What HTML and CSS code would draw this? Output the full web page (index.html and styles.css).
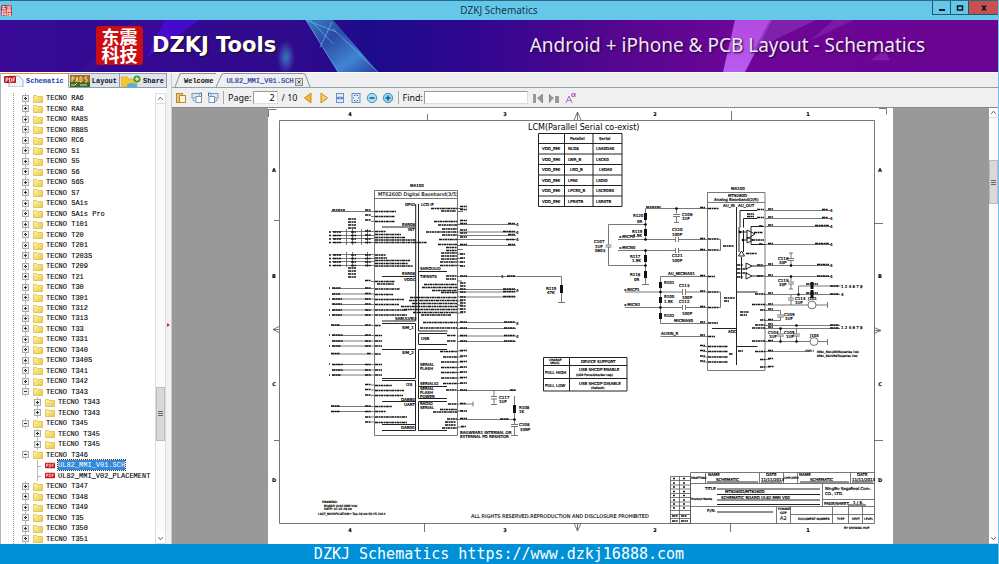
FILE: index.html
```html
<!DOCTYPE html>
<html lang="en">
<head>
<meta charset="utf-8">
<title>DZKJ Schematics</title>
<link rel="stylesheet" href="styles.css">
</head>
<body>
<svg class="defs" aria-hidden="true">
  <defs>
    <linearGradient id="gold" x1="0" y1="0" x2="1" y2="1"><stop offset="0" stop-color="#fff6a8"/><stop offset="1" stop-color="#ecc843"/></linearGradient>
    <symbol id="folder" viewBox="0 0 10 9"><path d="M.5 1.5h3l1 1h5v6h-9z" fill="url(#gold)" stroke="#d6b545" stroke-width=".7"/></symbol>
    <symbol id="pdf" viewBox="0 0 10 6"><rect width="10" height="6" rx="1" fill="#c4161c"/><path d="M1.5 4.5v-3h1.2v1.5H1.5M4.2 1.5v3h1l.6-.7V2l-.6-.5zM7.3 4.500v-3h1.500M7.300 3h1.200" fill="none" stroke="#fff" stroke-width=".6"/></symbol>
  </defs>
</svg>
<div class="window">
  <header class="titlebar">
    <span class="appicon" aria-hidden="true"><span>东震</span><span>科技</span></span>
    <h1>DZKJ Schematics</h1>
    <div class="winbtns">
      <button aria-label="Minimize"><svg viewBox="0 0 8 8"><path d="M1 6h6" stroke="#111" stroke-width="2"/></svg></button>
      <button aria-label="Maximize"><svg viewBox="0 0 8 8"><rect x="1.500" y="2" width="5" height="4" fill="none" stroke="#111" stroke-width="1.500"/></svg></button>
      <button class="close" aria-label="Close"><svg viewBox="0 0 8 8"><path d="M2 1.500l4 5M6 1.500l-4 5" stroke="#111" stroke-width="1.500"/></svg></button>
    </div>
  </header>

  <section class="banner">
    <svg class="art" viewBox="0 0 998 53" preserveAspectRatio="none" aria-hidden="true">
      <defs>
        <linearGradient id="tri" x1="0" y1="0" x2="1" y2="1"><stop offset="0" stop-color="#3d7fc0"/><stop offset=".35" stop-color="#2b4aa8"/><stop offset=".7" stop-color="#3f86d2"/><stop offset="1" stop-color="#2a3aa0"/></linearGradient>
        <linearGradient id="pink" x1="0" y1="0" x2="0" y2="1"><stop offset="0" stop-color="#b44ae0"/><stop offset="1" stop-color="#b65cf0"/></linearGradient>
        <radialGradient id="glow"><stop offset="0" stop-color="#3f8fd0" stop-opacity=".8"/><stop offset="1" stop-color="#3f8fd0" stop-opacity="0"/></radialGradient>
      </defs>
      <path d="M80 53l55-53h12L92 53z" fill="#35108f"/>
      <path d="M100 53l50-53h45l-40 30z" fill="#4208a8" opacity=".4"/>
      <path d="M165 0h34l-53 39z" fill="#4b0be0" opacity=".75"/>
      <ellipse cx="286" cy="38" rx="9" ry="17" fill="url(#glow)"/>
      <path d="M306 0h27l45 53h-40z" fill="url(#tri)"/>
      <path d="M306 0l32 53M310 0l23 24M320 28l12-26M333 9l45 44M306 0l30 12" stroke="#68bde6" fill="none" opacity=".7"/>
      <path d="M735 0h37l-27 53h-22z" fill="url(#pink)"/>
      <path d="M770 0h46l-62 30z" fill="#8c2cb8" opacity=".7"/>
      <path d="M834 0h20l-44 21z" fill="#8426ad" opacity=".6"/>
      <path d="M870 41l15-10 5 10z" fill="#8d2bb4" opacity=".6"/>
    </svg>
    <span class="logo" aria-hidden="true"><span>东震</span><span>科技</span></span>
    <strong>DZKJ Tools</strong>
    <p>Android + iPhone &amp; PCB Layout - Schematics</p>
  </section>

  <div class="work">
    <aside class="side">
      <nav class="sidetabs">
        <button class="on"><svg class="ic-pdf" viewBox="0 0 20 12"><path d="M5 1h10l4 4v7H5z" fill="#eef4fa" stroke="#9bb4c8"/><rect y="1" width="12" height="7" rx="1" fill="#b9161b"/><path d="M2 7V3h2v2H2M5.500 3v4h1l1-1V4l-1-1zM9 7V3h2M9 5h2" fill="none" stroke="#fff" stroke-width=".8"/></svg>Schematic</button>
        <button><svg class="ic-pads" viewBox="0 0 20 12"><rect width="20" height="12" fill="#a56b1e"/><rect y="7" width="20" height="5" fill="#356a2b"/><path d="M2 7V2h2v2H2M6 7l1-5 1 5M10 2v5h1l1-1V3l-1-1zM17 2h-2v2h2v3h-2M1 10h4l2-2M10 10h7" fill="none" stroke="#f6dc8c"/></svg>Layout</button>
        <button><svg class="ic-share" viewBox="0 0 20 12"><path d="M0 2h6l2 2h8v8H0z" fill="#f5c530" stroke="#dca31c" stroke-width=".6"/><ellipse cx="11" cy="10.500" rx="5" ry="2.500" fill="#55aee8"/><circle cx="16" cy="4" r="3.500" fill="#3d9d35"/><path d="M14 4h4M16 2v4" stroke="#fff"/></svg>Share</button>
      </nav>
      <div class="treebox">
        <ul class="tree" id="tree" role="tree" aria-label="Schematics"></ul>
        <div class="vscroll">
          <button aria-label="Scroll up"><svg viewBox="0 0 10 10"><path d="M2.500 6.500L5 3.500l2.500 3" fill="none" stroke="#555"/></svg></button>
          <span class="thumb"></span>
          <button aria-label="Scroll down"><svg viewBox="0 0 10 10"><path d="M2.500 3.500L5 6.500l2.500-3" fill="none" stroke="#555"/></svg></button>
        </div>
      </div>
    </aside>
    <div class="splitter"></div>
    <main class="main">
      <nav class="doctabs">
        <svg class="slant" viewBox="0 0 8 14"><path d="M1 14L6 1l2-.5" fill="none" stroke="#8795a3"/></svg>
        <button>Welcome</button>
        <svg class="slant" viewBox="0 0 8 14"><path d="M0 14L6 1l2-.5" fill="none" stroke="#8795a3"/></svg>
        <button class="on">UL82_MMI_V01.SCH</button>
        <button class="x" aria-label="Close tab"><svg viewBox="0 0 8 8"><rect x=".5" y=".5" width="7" height="7" fill="#ddd" stroke="#888"/><path d="M2.500 2.500l3 3M5.500 2.500l-3 3" stroke="#555"/></svg></button>
        <svg class="slant" viewBox="0 0 8 14"><path d="M0 .5l2 .5 5 13" fill="none" stroke="#8795a3"/></svg>
      </nav>
      <div class="toolbar">
        <button aria-label="Copy"><svg viewBox="0 0 12 12"><rect x="1.500" y="1.500" width="6" height="9" fill="#f0c46a" stroke="#b58c3c"/><rect x="4.500" y="3.500" width="6" height="7" fill="#fff3d2" stroke="#b58c3c"/></svg></button>
        <button aria-label="Rotate left"><svg viewBox="0 0 12 12"><rect x="1" y="1.500" width="7" height="4.500" fill="#dcecf8" stroke="#7197b9"/><rect x="5" y="4.500" width="5.500" height="6" fill="#fff" stroke="#7197b9"/><path d="M8.500 1h2v3M2 7.500l1.500 2" stroke="#2d6da6" fill="none"/></svg></button>
        <button aria-label="Rotate right"><svg viewBox="0 0 12 12"><rect x="4" y="1.500" width="7" height="4.500" fill="#dcecf8" stroke="#7197b9"/><rect x="2" y="4.500" width="5.500" height="6" fill="#fff" stroke="#7197b9"/><path d="M3.500 1h-2v3M10 7.500l-1.500 2" stroke="#2d6da6" fill="none"/></svg></button>
        <span class="sep"></span>
        <label for="page">Page:</label><input id="page" class="page" value="2"><span class="of">/ 10</span>
        <button aria-label="Previous page"><svg viewBox="0 0 12 12"><path d="M9 1v10L2.500 6z" fill="#f0b73a" stroke="#c88a1c"/></svg></button>
        <button aria-label="Next page"><svg viewBox="0 0 12 12"><path d="M3 1v10L9.500 6z" fill="#f6cf6a" stroke="#c88a1c"/></svg></button>
        <button aria-label="Fit width"><svg viewBox="0 0 12 12"><rect x="2.500" y="1.500" width="7" height="9" fill="#e4eefa" stroke="#6c8fc4"/><path d="M3 6h6M5 4.500L3.500 6 5 7.500M7 4.500L8.500 6 7 7.500" stroke="#2769b0" fill="none"/></svg></button>
        <button aria-label="Fit page"><svg viewBox="0 0 12 12"><rect x="2" y="1.500" width="8" height="9" fill="#e4eefa" stroke="#6c8fc4"/><path d="M6 2.500v1M6 8.500v1M3 6h1M8 6h1M4 4l1-1M7 3l1 1M4 8l1 1M7 9l1-1" stroke="#2769b0"/></svg></button>
        <button aria-label="Zoom out"><svg viewBox="0 0 12 12"><circle cx="6" cy="6" r="4.700" fill="#a5dcf4" stroke="#4b8fc0"/><path d="M3.500 6h5" stroke="#1c5790" stroke-width="1.500"/></svg></button>
        <button aria-label="Zoom in"><svg viewBox="0 0 12 12"><circle cx="6" cy="6" r="4.700" fill="#8fd2f2" stroke="#4b8fc0"/><path d="M3.500 6h5M6 3.500v5" stroke="#1c5790" stroke-width="1.500"/></svg></button>
        <span class="sep"></span>
        <label for="find">Find:</label><input id="find" class="find">
        <button aria-label="Find previous"><svg viewBox="0 0 12 12"><path d="M1 2h3v9H1zM5 6l5-4v9z" fill="#999"/><path d="M10.500 2v9" stroke="#888"/></svg></button>
        <button aria-label="Find next"><svg viewBox="0 0 12 12"><path d="M1 2l5 4-5 5zM7 4h4v7H7z" fill="#999"/><path d="M1.500 2v9" stroke="#888"/></svg></button>
        <button aria-label="Match case"><svg viewBox="0 0 12 12"><path d="M2 11l3-7 3 7M3 8.500h4" fill="none" stroke="#a078c4"/><circle cx="9" cy="3" r="1.500" fill="none" stroke="#b050b8"/><path d="M11 1v4" stroke="#b050b8"/></svg></button>
      </div>
      <div class="viewer">
        <div class="canvas">
          <svg class="sheet" viewBox="268 107 625 437" role="img" aria-label="Schematic page 2">
            <rect x="268" y="107" width="625" height="437" fill="#fff"/>
            <path class="w" d="M268.500 116v-7.500h8M879 107.500h7.500v6M279.500 119.500h595v403h-595zM427.500 113v6M731.500 110v9M424.500 522v9M730.500 522v9M274 219.500h5M274 439.500h5M874 222.500h9M874 439.500h9M577.500 111v8M574 119l3.500-8 3.500 8M577.500 522v8M574 522l3.500 8 3.500-8M279 325.500l-6 3 6 3M273 328.500h6M874 326.500l7 3-7 3M874 329.500h7"/>
            <g class="t5 mid">
              <text x="350" y="115">4</text><text x="505" y="115">3</text><text x="655" y="115">2</text><text x="808" y="115">1</text>
              <text x="350" y="531">4</text><text x="505" y="531">3</text><text x="655" y="531">2</text><text x="808" y="531">1</text>
              <text x="274" y="171">A</text><text x="274" y="277">B</text><text x="274" y="385">C</text><text x="274" y="481">D</text>
              <text x="880" y="171">A</text><text x="880" y="277">B</text><text x="880" y="385">C</text><text x="880" y="481">D</text>
            </g>

            <!-- LCM table -->
            <text class="t8" x="528" y="129">LCM(Parallel Serial co-exist)</text>
            <path class="w b" d="M538.500 132.500h83.500v73h-83.500zM564.500 132.500v73M593 132.500v73M538.500 142.500h83.500M538.500 153h83.500M538.500 163.500h83.500M538.500 174h83.500M538.500 184.500h83.500M538.500 195h83.500"/>
            <g class="t4">
              <text x="570" y="139">Parallel</text><text x="599" y="139">Serial</text>
              <text x="542" y="149">VDD_EMI</text><text x="568" y="149">NLD8</text><text x="596" y="149">LSA0DA0</text>
              <text x="542" y="160">VDD_EMI</text><text x="568" y="160">LWR_B</text><text x="596" y="160">LSCK0</text>
              <text x="542" y="170">VDD_EMI</text><text x="570" y="170">LRD_B</text><text x="599" y="170">LSDA0</text>
              <text x="542" y="181">VDD_EMI</text><text x="568" y="181">LPA0</text><text x="596" y="181">LSDI0</text>
              <text x="542" y="191">VDD_EMI</text><text x="568" y="191">LPCE0_B</text><text x="596" y="191">LSCE0B0</text>
              <text x="542" y="202">VDD_EMI</text><text x="568" y="202">LPRSTB</text><text x="596" y="202">LSRSTB</text>
            </g>

            <!-- Digital baseband -->
            <text class="t4" x="410" y="186">MA100</text>
            <text class="t5" x="378" y="195">MT6260D Digital Baseband(3/5)</text>
            <path class="w" d="M374.500 189.500h83v245h-83zM374.500 197.500h83"/>
            <path class="w b" d="M415.700 203v117M418.500 203v127h29M382 226h33.500M382 275.500h33.500M382 320h33.500M382 322.500h33.500v55H382M382 348.500h33.500M382 379.500h33.500v50H382M382 400.500h33.500M382 423.500h33.500M419 270.500h28M447 332.500h-28.500v11H447M447 348.500h-28.500v49H447M419 385.500h28M447 400.500h-28.500v29H447"/>
            <path class="w" d="M331 210.500h43M371 215.500h3M371 220.500h3M332 230.500h42M332 234.500h42M332 237.500h42M332 241.500h42M332 253.500h42M332 257.500h42M332 260.500h42M332 264.500h42M371 280.500h3M332 287.500h42M332 293h42M332 298h42M332 303.500h42M332 309h42M332 314h42M331 324.500h43M332 334.500h42M332 340h42M332 345h42M331 353h43M332 363.500h42M332 369h42M332 374h42M371 384h3M371 389h3M371 394.500h3M331 405.500h43M331 410.500h43M371 416h3M371 421h3"/>
            <path class="w" d="M457 207.500h6M457 210.500h6M457 223.500h59M457 231h59M457 234.500h59M457 238.500h59M457 244.500h59M457 248.500h6M457 253h6M457 257.500h6M457 261h6M457 264.500h6M457 275.500h104.500v26M558 301.500h7M457 280h5M457 288.500h59M457 291h59M457 296h59M457 300h6M457 304h6M457 308h6M457 312h6M457 321.500h59M457 327.500h59M457 335h59M457 340.500h59M457 350h6M457 356h6M457 361h6M457 366.500h6M457 371.500h6M457 377h6M457 382.500h6M457 389.500h59M457 403h16M473 400.500v5M457 410h6M457 418.500h58M457 426h6M346.500 228v16M352.500 228v16M361.500 228v16M346.500 251v15M352.500 251v15M367.500 228v15M367.500 251v15"/>
            <path class="k" d="M332 209h13M365 209h6M365 214h6M365 219h6M375 210.500h21M375 215.500h20M375 220.500h20M333 231h8M333 234.500h8M333 238h8M333 241.500h8M329 231h2M329 234.500h2M329 238h2M329 241.500h2M351 231h5M351 234.500h5M351 238h5M351 241.500h5M365 230h6M365 234h6M365 238h6M365 241.500h6M375 230.500h11M375 233.500h26M375 236.500h30M375 239h41M375 241.500h52M333 254h8M333 257.500h8M333 261h8M333 264.500h8M329 254h2M329 257.500h2M329 261h2M329 264.500h2M351 254h5M351 257.500h5M351 261h5M351 264.500h5M365 254h6M365 257.500h6M365 261h6M365 264.500h6M375 254h11M375 257h12M375 259.500h35M375 262.500h33M375 265h38M348 218h8M348 221h8M348 224h8M348 227h8M348 267h8M348 270h8M348 273h8M348 276h8"/>
            <path class="k" d="M365 279.500h6M375 280.500h20M377 283h17M332 287h9M332 293h8M332 298h10M332 303h10M332 309h10M332 314h10M365 287h6M365 292.500h6M365 298h6M365 303h6M365 309h6M365 314h6M375 288h25M375 293.500h18M375 298.500h29M375 303.500h24M375 309h32M375 314h32M331 324h9M365 324h6M375 324.500h6M332 334h11M332 340h11M332 345h9M365 334h6M365 340h6M365 345h6M375 334.500h7M375 340h7M375 345h7M331 352.500h9M367 352.500h4M375 353h6M332 363.500h11M332 369h11M332 374h9M365 363.500h6M365 369h6M365 374h6M375 363.500h7M375 369h7M375 374h7M365 383.500h6M365 388.500h6M365 394h6M375 384.500h17M375 389.500h29M375 394.500h28M331 405h9M331 410.500h9M365 405h6M365 410.500h6M375 405.500h17M375 410.500h11M365 416h6M365 421h6M375 416h32M375 421.500h32M329 287h1M329 298h1M329 309h1M329 314h1M329 334h1M329 345h1M329 363h1M329 374h1"/>
            <path class="k" d="M431 207.500h26M441 210h15M460 205.500h7M460 208.500h7M434 220.500h23M438 224h19M442 228h15M426 231h31M442 234h15M439 238.500h18M438 243.500h19M446 246.500h11M446 249.500h11M441 252h16M441 255h16M441 258h16M440 261h17M440 264.500h17M460 219.500h7M460 222.500h7M460 229h7M460 232h7M460 236h7M460 243.500h7M460 253h5M460 257h5M460 261h5M460 265h5M508 222.500h7M503 230.500h12M508 233.500h7M506 238.500h9M508 243.500h7M446 275h11M446 278h10M460 275h7M507 275h8M424 283.500h33M422 286.500h35M432 289.500h25M441 291.500h16M410 296.500h47M409 299.500h48M412 302.500h45M401 305.500h56M404 308.500h53M413 311.500h44M421 314h30M460 282h6M460 285h6M460 288h6M460 291h6M460 296h6M460 299h6M460 302h6M460 305h6M460 308h6M460 311h6M503 288h12M503 290.500h12M503 295.500h12M423 321.500h34M420 327h37M460 321h7M460 327h7M504 321h11M504 327h11M447 334.500h9M447 340h9M460 334.500h7M460 340h7M504 334.500h11M504 340h11M440 350.500h17M443 356h14M441 361h16M441 366.500h16M441 371.500h16M441 377h16M443 382.500h14M460 349.500h7M460 355h7M460 360.500h7M460 366h7M460 371h7M460 376.500h7M460 382h7M446 389h11M460 389h7M510 389h6M448 403h9M460 402.500h6M440 408.500h17M433 411h24M460 410h7M447 418h10M460 417.500h7M500 418h9M445 421h11M445 424h11M442 427h15M461 425.500h5"/>
            <g class="t4">
              <text x="405" y="205">GPIO</text><text x="421" y="205">LCD IF</text><text x="402" y="225">EAR08</text><text x="408" y="230">INT</text><text x="402" y="274">EAR08</text><text x="404" y="280">VDDC</text><text x="420" y="269">SARDULIO</text><text x="420" y="277">TIENSTS</text><text x="395" y="319">SABULVBU</text><text x="402" y="328">SIM_1</text><text x="421" y="339">USB</text><text x="402" y="353">SIM_2</text><text x="420" y="365">SERIAL</text><text x="420" y="369">FLASH</text><text x="420" y="384">SERIALIO</text><text x="420" y="389">SERIAL</text><text x="420" y="393">FLASH</text><text x="420" y="397">POWER</text><text x="406" y="385">I2S</text><text x="401" y="400">DABB0</text><text x="404" y="405">UART</text><text x="420" y="404">RADIO</text><text x="420" y="408">SERIAL</text><text x="401" y="428">DAB00</text>
              <text x="460" y="433">BAILWEAR1 INTERNAL OR</text><text x="460" y="437">EXTERNAL PD RESISTOR</text>
              <text x="546" y="289">R115</text><text x="547" y="293">47K</text><text x="499" y="398">C117</text><text x="499" y="402">1UF</text><text x="519" y="408">R108</text><text x="519" y="412">1K</text><text x="519" y="425">C108</text><text x="520" y="430">33NF</text><text x="501" y="277">1</text>
              <text x="516" y="225">4</text><text x="516" y="233">4</text><text x="516" y="240">4</text><text x="516" y="291">4</text><text x="516" y="324">4</text><text x="516" y="337">4</text>
            </g>
            <path class="w" d="M494 389v6M491 395.500h6M491 398h6M494 398v5M491 403.500h6M514.500 395v24M514.500 419v4M511 423.500h7M511 425.500h7M514.500 426v8M511 434.500h7"/>
            <path class="r" d="M561.500 284v8M514.500 404v8"/>

            <!-- Support table -->
            <path class="w b" d="M543.500 356.500h83.500v33.500h-83.500zM569.500 356.500v33.500M543.500 364.500h83.500M543.500 377.500h83.500"/>
            <g class="t3"><text x="549" y="360">CHARGE</text><text x="550" y="363">I(BUS)</text></g>
            <g class="t4"><text x="581" y="362">DEVICE SUPPORT</text><text x="545" y="373">PULL HIGH</text><text x="579" y="370">USB SHCDP ENABLE</text><text x="545" y="386">PULL LOW</text><text x="579" y="384">USB SHCDP DISABLE</text></g>
            <g class="t3"><text x="576" y="375">(USB Forced/docker cap)</text><text x="591" y="388">(Default)</text></g>

            <!-- Analog input network -->
            <path class="w" d="M645.500 207.500h62M645.500 207.500v31.500M676.500 207.500v5M673 213.500h7M673 215.500h7M676.500 216v5M674 221.500h5M608.500 223.500h37M608.500 223.500v20M605.500 244h6M605.500 246h6M608.500 246v18.500h37M618 238.500h57M679 238.500h28M618 249.500h57M679 249.500h28M675.500 236v5M678.500 236v5M675.500 247v5M678.500 247v5M645.500 249.500v34M642 283.500h7M660.500 275.500h47M660.500 275.500v47h47M625 291h57M686 291h21M625 306.500h57M686 306.500h21M682.500 288v6M685.500 288v6M682.500 304v5M685.500 304v5M660.500 335.500h47M703 345.500h4M703 350.500h4M703 356h4M703 361h4"/>
            <path class="r" d="M645.500 212v7M645.500 228v7M645.500 254v7M645.500 270v7M660.500 281v6M660.500 296v6M660.500 312v6"/>
            <g class="d"><circle cx="645.500" cy="223.500" r="1.300"/><circle cx="645.500" cy="238.500" r="1.300"/><circle cx="645.500" cy="249.500" r="1.300"/><circle cx="645.500" cy="264.500" r="1.300"/><circle cx="676.500" cy="207.500" r="1.300"/><circle cx="660.500" cy="291" r="1.300"/><circle cx="660.500" cy="306.500" r="1.300"/><circle cx="514.500" cy="418.500" r="1.300"/></g>
            <g class="t4">
              <text x="633" y="216">R120</text><text x="637" y="222">0R</text><text x="632" y="232">R119</text><text x="633" y="236">1.5K</text><text x="594" y="242">C107</text><text x="595" y="247">1UF</text><text x="595" y="251">0603</text><text x="630" y="257">R117</text><text x="632" y="261">1.5K</text><text x="630" y="275">R118</text><text x="634" y="280">0R</text><text x="682" y="215">C106</text><text x="682" y="219">1UF</text><text x="672" y="230">C120</text><text x="672" y="235">100P</text><text x="672" y="256">C121</text><text x="672" y="261">100P</text><text x="664" y="283">R101</text><text x="664" y="297">R100</text><text x="664" y="302">1.5K</text><text x="664" y="316">R102</text><text x="679" y="286">C113</text><text x="682" y="298">100P</text><text x="679" y="302">C112</text><text x="682" y="314">100P</text><text x="668" y="274">AU_MICBIAS1</text><text x="674" y="321">MICBIAS0</text><text x="661" y="334">AUXIN_R</text>
              <text x="619" y="237">&#9666; MICP0</text><text x="619" y="248">&#9666; MICN0</text><text x="624" y="290">&#9666; MICP1</text><text x="624" y="305">&#9666; MICN1</text>
            </g>
            <path class="k" d="M646 206h15M700 206.500h5M708 207.500h11M700 237.500h5M708 238h11M700 248.500h5M708 249h11M700 274.500h5M708 275.500h7M700 290h5M708 291h11M700 305.500h5M708 306.500h11M700 321h5M708 322h10M700 334h5M708 335.500h7M700 344.500h5M700 349.500h5M700 355h5M700 360h5M708 345.500h20M708 350.500h20M708 356h20M708 361h20"/>

            <!-- Analog baseband -->
            <path class="w" d="M707.500 191.500h57.500v178h-57.500zM707.500 201.500h57.500M719 238.500h1.500v11H719M719 291h1.500v15.500H719"/>
            <path class="w b" d="M736.500 206v158M712 327.500h24M736.500 291h21M736.500 345.500h21M757 209.500h-17v17M757 217.500h-13.500v9M739 226v25M743.500 229v22M764 225.500h-13v18h14M739 231h8M743 239h4M741.500 256v22M747 229l8 4-8 5zM747 236l6 3-6 3zM741.500 250l3 5h-6zM746 262l6 3-6 3zM746 272l6 3-6 3zM752 265h13M752 275h13"/>
            <path class="w" d="M765 209.500h65M765 217.500h65M765 225.500h65M765 243.500h65M765 264.500h65M765 275.500h65M765 293.500h75M798.500 293.500v-8.500h42M765 304h43M816 304h11.500M827.500 301v6M765 309.500h15.500v4M777 314h7M777 316h7M780.500 316v3.500h-15.500M765 324.500h75M765 327.500h75M765 340.500h45M818 340.500h9.500M827.500 338v6M765 350.500h40M765 358.500h5M765 366h5M791 264.500v-5M788 259.500h6M788 257.500h6M791 257v-5M789 252h4M791 275.500v5M788 281h6M788 283h6M791 283v5M789 288h4M791 293.500v3M788 297h6M788 299h6M791 299v5M780.500 327.500v5M777 333h7M777 335h7M780.500 335v5M796.500 327.500v5M793 333h7M793 335h7M796.500 335v5"/>
            <circle class="w" cx="812" cy="304" r="4"/><circle class="w" cx="814" cy="340.500" r="4"/>
            <path class="r" d="M812 281v7M812 289v8"/>
            <g class="d"><circle cx="791" cy="264.500" r="1.300"/><circle cx="791" cy="275.500" r="1.300"/><circle cx="798.500" cy="293.500" r="1.300"/><circle cx="780.500" cy="327.500" r="1.300"/><circle cx="796.500" cy="324.500" r="1.300"/><circle cx="780.500" cy="340.500" r="1.300"/><circle cx="796.500" cy="340.500" r="1.300"/><circle cx="740" cy="231" r="1.300"/><circle cx="743" cy="239" r="1.300"/></g>
            <path class="k" d="M757 208.500h7M757 216.500h7M759 225h4M754 231.500h9M752 239h12M759 243h4M747 213h7M747 215.500h7M746 252.500h11M737 264h6M737 268h10M737 272h10M737 276h6M757 264h6M757 275h6M768 208h5M768 216h5M768 224h5M768 242.500h5M768 263h5M768 274h5M822 208.500h6M822 216.500h6M815 224.500h14M815 242.500h14M817 263.500h12M817 275h12M755 293h10M752 303.500h13M760 309h5M760 319h5M755 324h10M752 327h13M752 340h13M755 350.500h10M760 358.500h5M760 366h5M768 292h5M768 303h5M768 308h5M768 318.500h5M768 323h5M768 326h5M768 339.500h5M768 349.500h5M768 357.500h5M768 365.500h6M830 285h9M830 293h9M830 324h9M830 327h9M723 245h11M724 297h11M724 300h5M740 311h9M740 314h7M738 350h5M729 353h4M806 283h12M806 292h12"/>
            <g class="t4">
              <text x="731" y="189">MA100</text><text x="728" y="196">MT6260D</text><text x="714" y="200">Analog Baseband(2/5)</text><text x="723" y="206">AU_IN</text><text x="738" y="206">AU_OUT</text><text x="728" y="332">ADC</text>
              <text x="778" y="259">C118</text><text x="779" y="263">33P</text><text x="778" y="281">C119</text><text x="779" y="285">33P</text><text x="795" y="299">C114</text><text x="795" y="303">1UF</text><text x="784" y="315">C109</text><text x="785" y="319">1UF</text><text x="768" y="333">C104</text><text x="769" y="337">1UF</text><text x="784" y="333">C105</text><text x="786" y="337">1UF</text><text x="808" y="299">J101</text><text x="810" y="336">J104</text>
              <text x="841" y="287">1 2 4 6 7 8</text><text x="841" y="295">4</text><text x="841" y="328">1 2 4 6 7 8</text><text x="830" y="211">4</text><text x="830" y="219">4</text><text x="830" y="227">4</text><text x="830" y="245">4</text><text x="830" y="266">4</text><text x="830" y="277">4</text>
            </g>
            <g class="t3"><text x="805" y="351">GND I</text><text x="817" y="352">KPAL_BALUNDR0/serias 100</text><text x="817" y="356">KPAL_BALVBAT0/serias 200</text></g>

            <!-- Notes -->
            <g class="t3"><text x="322" y="502">DRAWING:</text><text x="324" y="506">BOARD UL82 MMI V00</text><text x="324" y="509">DATE: 01 04 28 00</text><text x="318" y="514">LAST_MODIFICATION= Tue 28 09:33:25 2014</text></g>
            <text class="t5" x="471" y="517">ALL RIGHTS RESERVED.REPRODUCTION AND DISCLOSURE PROHIBITED</text>

            <!-- Title block -->
            <path class="w" d="M670.500 475.500h20v47h-20zM679.500 475.500v47M670.500 479.500h20M670.500 484h20M670.500 488h20M670.500 492.500h20M670.500 496.500h20M670.500 501h20M670.500 505h20M670.500 509.500h20M670.500 513.500h20M670.500 517.500h20M690.500 471.500v51M690.500 471.500h184M690.500 482.500h184M690.500 505.500h184M705.500 471.500v11M759.500 471.500v11M783.500 471.500v11M797.500 471.500v11M850.500 471.500v11M822.500 482.500v23M822.500 498.500h52M776.500 505.500v17M790.500 505.500v17M832.500 505.500v17M848.500 505.500v17M862.500 505.500v17M790.500 513.500h84"/>
            <path class="w b" d="M707 481h51M761 481h21M800 481h49M852 481h21M717 488h103M717 493.500h103M717 499h103M717 503.500h103M717 511h56M848 504h18"/>
            <path class="k" d="M673 477.500h2M683 477.500h2M673 482h2M683 482h2M673 486h2M683 486h2M673 490.500h2M683 490.500h2M673 494.500h2M683 494.500h2M673 499h2M683 499h2M673 503h2M683 503h2M673 507h2M683 507h2M672 515h6M681 515h6M672 520h6M681 520h7"/>
            <g class="t4">
              <text x="708" y="475">NAME</text><text x="716" y="480">SCHEMATIC</text><text x="766" y="475">DATE</text><text x="761" y="480">11/11/2013</text><text x="799" y="475">NAME</text><text x="810" y="480">SCHEMATIC</text><text x="857" y="475">DATE</text><text x="852" y="480">11/11/2013</text>
              <text x="705" y="489">TITLE</text><text x="725" y="492">MT6260D/MT6260D</text><text x="721" y="498">SCHEMATIC BOARD UL82 MMI V00</text><text x="825" y="489">NingBo SagaReal Com.</text><text x="825" y="494">CO., LTD.</text><text x="824" y="504">PAGE/SHEET</text><text x="853" y="503">1 / 8.</text><text x="707" y="511">P./N.</text>
            </g>
            <g class="t3"><text x="691" y="478">DRAFTING</text><text x="784" y="478">CHECKED</text><text x="691" y="499">Product Name</text><text x="778" y="509">FORMAT</text><text x="780" y="513">SIZE</text><text x="798" y="519">DOCUMENT NUMBER</text><text x="837" y="519">TYPE</text><text x="852" y="519">DEPT</text><text x="864" y="519">LEVEL</text><text x="844" y="528">BY SHIYANG HOE</text></g>
            <text class="t5" x="780" y="519">A2</text>
          </svg>
        </div>
        <div class="vscroll wide">
          <button aria-label="Scroll up"><svg viewBox="0 0 10 10"><path d="M2.500 6.500L5 3.500l2.500 3" fill="none" stroke="#555"/></svg></button>
          <span class="thumb"></span>
          <button aria-label="Scroll down"><svg viewBox="0 0 10 10"><path d="M2.500 3.500L5 6.500l2.500-3" fill="none" stroke="#555"/></svg></button>
        </div>
      </div>
    </main>
  </div>
  <footer>DZKJ Schematics https://www.dzkj16888.com</footer>
</div>
<script src="tree.js"></script>
</body>
</html>
```
FILE: styles.css
```css
* { box-sizing: border-box; }
body { margin: 0; font-family: "Noto Sans", "Open Sans", sans-serif; color: #111; }
h1, p, ul { margin: 0; padding: 0; }
button { border: 0; padding: 0; margin: 0; background: none; font: inherit; color: inherit; }
svg { display: block; }
.defs { position: absolute; width: 0; height: 0; }

.window { height: 100vh; display: flex; flex-direction: column; background: #efefef; border-right: 1px solid #68c5e6; }

.titlebar { flex: none; height: 20px; background: #65c8e9; border-top: 1px solid #2a6a86; display: grid; grid-template-columns: 1fr auto 1fr; align-items: center; }
.titlebar h1 { font-size: 10px; font-weight: 400; line-height: 19px; color: #16384a; }
.appicon { width: 11px; height: 11px; margin-left: 1px; background: #b8181c; color: #fff; border-radius: 2px; font: bold 5px/5px "Noto Sans CJK SC", sans-serif; text-align: center; overflow: hidden; }
.appicon span, .logo span { display: block; }
.winbtns { justify-self: end; align-self: start; display: flex; border: 1px solid #22566c; border-top: 0; border-right: 0; }
.winbtns button { width: 18px; height: 13px; display: flex; align-items: center; justify-content: center; border-right: 1px solid #22566c; }
.winbtns svg { width: 8px; height: 8px; }
.winbtns .close { width: 29px; background: #c75050; border-right: 0; }

.banner { flex: none; height: 53px; position: relative; display: flex; align-items: center; padding: 0 73px 2px 96px; border-bottom: 1px solid #fff; background: linear-gradient(90deg, #360a96 0, #300a8c 30%, #1d0b8c 37%, #2f0790 47%, #55068f 62%, #6d0698 74%, #6a0492 100%); color: #fff; }
.art { position: absolute; left: 0; top: 0; width: 100%; height: 100%; }
.logo { position: relative; width: 47px; height: 39px; padding-top: 1px; border-radius: 3px; background: #c90d12; font: bold 18px/18px "Noto Sans CJK SC", sans-serif; text-align: center; }
.banner strong { position: relative; margin-left: 9px; font: bold 21px/30px "DejaVu Sans", sans-serif; text-shadow: 1px 1px 1px #111; }
.banner p { position: relative; margin-left: auto; font-size: 19px; line-height: 28px; color: #f3e6fb; text-shadow: 1px 1px 2px #1c0530; white-space: nowrap; }

.work { flex: 1; min-height: 0; display: flex; }
.side { width: 166px; flex: none; display: flex; flex-direction: column; border-left: 1px solid #a9b7c4; background: #fff; }
.sidetabs { height: 15px; flex: none; display: flex; margin-right: -5px; position: relative; z-index: 1; font: bold 7px/14px "Liberation Mono", monospace; background: #efefef; }
.sidetabs button { display: flex; align-items: center; gap: 2px; padding: 0 2px 0 1px; background: #dfe3ee; border: 1px solid #8f9db0; border-left: 0; white-space: nowrap; }
.sidetabs .on { background: #fff; color: #1c3fa8; border-top-color: #e68b2c; border-bottom-color: #fff; padding: 0 4px 0 3px; }
.sidetabs svg { width: 20px; height: 12px; }
.treebox { flex: 1; min-height: 0; display: flex; padding-top: 5px; }
.tree { flex: 1; min-width: 0; list-style: none; display: grid; grid-auto-rows: 1fr; margin-left: 12px; border-left: 1px dotted #999; font: 7px/10px "Liberation Mono", monospace; color: #000; -webkit-text-stroke: .1px #000; }
.tree li { min-height: 0; display: flex; align-items: center; padding-left: 8px; white-space: nowrap; background: linear-gradient(#bbb, #bbb) 11px 0 / 1px 100% no-repeat; }
.tree li.sub { padding-left: 20px; background-position: 23px 0; }
.tree button { width: 7px; height: 7px; flex: none; border: 1px solid #aaa; background: linear-gradient(#333, #333) center / 3px 1px no-repeat, linear-gradient(#333, #333) center / 1px 3px no-repeat, #eee; }
.tree button.open { background: linear-gradient(#333, #333) center / 3px 1px no-repeat, #eee; }
.tree .link { width: 7px; height: 7px; flex: none; }
.tree .link::after { content: ""; display: block; width: 4px; height: 4px; margin-left: 3px; border-bottom: 1px solid #aaa; }
.tree svg { width: 10px; height: 9px; margin: 0 3px 0 4px; flex: none; }
.tree .sel span { background: #3488d8; color: #fff; -webkit-text-stroke: 0; outline: 1px dotted #333; }

.vscroll { width: 11px; flex: none; display: flex; flex-direction: column; justify-content: space-between; background: #fbfbfb; border: 1px solid #ddd; border-bottom: 0; position: relative; }
.vscroll button { width: 100%; height: 10px; display: flex; justify-content: center; border-bottom: 1px solid #ddd; background: #fff; }
.vscroll svg { width: 9px; height: 9px; }
.thumb { position: absolute; left: 0; right: 0; top: 65%; height: 12%; background: linear-gradient(#666, #666) center calc(50% - 2px) / 5px 1px no-repeat, linear-gradient(#666, #666) center / 5px 1px no-repeat, linear-gradient(#666, #666) center calc(50% + 2px) / 5px 1px no-repeat, #d9d9d9; border: 1px solid #bbb; }
.wide { width: 9px; border-width: 0; }
.wide .thumb { top: 12%; height: 10%; }
.splitter { width: 6px; flex: none; display: flex; align-items: center; background: #f2f2f2; border-right: 1px solid #ccc; }
.splitter::after { content: ""; margin-left: 1px; margin-top: 32px; border: 2px solid transparent; border-left: 3px solid #e02030; border-right: 0; }

.main { flex: 1; min-width: 0; display: flex; flex-direction: column; }
.doctabs { flex: none; height: 15px; display: flex; align-items: flex-end; font: bold 7px/14px "Liberation Mono", monospace; border-bottom: 1px solid #8fa0b0; padding-left: 2px; }
.doctabs .slant { width: 8px; height: 14px; }
.doctabs button { height: 14px; padding: 0 3px 0 2px; white-space: nowrap; border-top: 1px solid #8795a3; }
.doctabs .on { color: #2a3aa8; padding: 0 1px 0 2px; font-weight: 400; -webkit-text-stroke: .2px #2a3aa8; }
.doctabs .x { padding: 2px 0 0; }
.doctabs .x svg { width: 8px; height: 8px; }
.toolbar { flex: none; height: 19px; display: flex; align-items: center; padding-left: 3px; gap: 4px; background: #f0f0f0; font-size: 9px; line-height: 18px; }
.toolbar button, .toolbar svg { width: 12px; height: 12px; }
.sep { width: 1px; height: 13px; background: #aaa; }
.toolbar input { height: 13px; border: 1px solid #ddd; border-top-color: #999; border-left-color: #999; background: #fff; font: inherit; line-height: 11px; padding: 0 2px; }
.toolbar label { margin-right: -3px; }
.toolbar .page { width: 25px; text-align: right; }
.toolbar .find { width: 104px; }

.viewer { flex: 1; min-height: 0; display: flex; border-top: 1px solid #888; }
.canvas { flex: 1; min-width: 0; overflow: hidden; background: #999; display: grid; grid-template-columns: 96fr 625fr 96fr; align-items: start; }
.sheet { grid-column: 2; width: 100%; height: auto; font-family: "DejaVu Sans", sans-serif; }
.w { fill: none; stroke: #555; stroke-width: .8px; }
.b { stroke: #222; stroke-width: 1px; }
.k { fill: none; stroke: #161616; stroke-width: 1.7px; stroke-dasharray: 3 .5 1.500 .4; }
.r { fill: none; stroke: #111; stroke-width: 3px; }
.d { fill: #000; }
.t3 { font-size: 3px; stroke: #000; stroke-width: .2px; }
.t4 { font-size: 4px; stroke: #000; stroke-width: .2px; }
.t5 { font-size: 5px; stroke: #000; stroke-width: .1px; }
.t8 { font-size: 8px; }
.mid { text-anchor: middle; font-weight: bold; }

footer { flex: none; height: 20px; background: #0090d8; color: #fff; text-align: center; font: 15px/20px "DejaVu Sans Mono", monospace; }
```
FILE: tree.js
```js
const nodes = ["RA6", "RA8", "RA8S", "RB8S", "RC6", "S1", "S5", "S6", "S6S", "S7", "SA1s", "SA1s Pro",
  "T101", "T20", "T201", "T203S", "T209", "T21", "T30", "T301", "T312", "T313", "T33", "T331", "T340",
  "T340S", "T341", "T342", "T343", ">T343", ">T343", "T345", ">T345", ">T345", "T346",
  "#UL82_MMI_V01.SCH", "#UL82_MMI_V02_PLACEMENT", "T347", "T348", "T349", "T35", "T350", "T351"];
const opened = ["T343", "T345", "T346"];

document.getElementById("tree").innerHTML = nodes.map((node) => {
  if (node[0] === "#") {
    const name = node.slice(1);
    const cls = name.endsWith("SCH") ? "sub sel" : "sub";
    return `<li class="${cls}" role="treeitem"><i class="link"></i><svg viewBox="0 0 10 6"><use href="#pdf"/></svg><span>${name}</span></li>`;
  }
  const sub = node[0] === ">";
  const open = opened.includes(node);
  return `<li class="${sub ? "sub" : ""}" role="treeitem"><button class="${open ? "open" : ""}" aria-label="${open ? "Collapse" : "Expand"}"></button><svg viewBox="0 0 10 9"><use href="#folder"/></svg><span>TECNO ${node.replace(">", "")}</span></li>`;
}).join("");
```
